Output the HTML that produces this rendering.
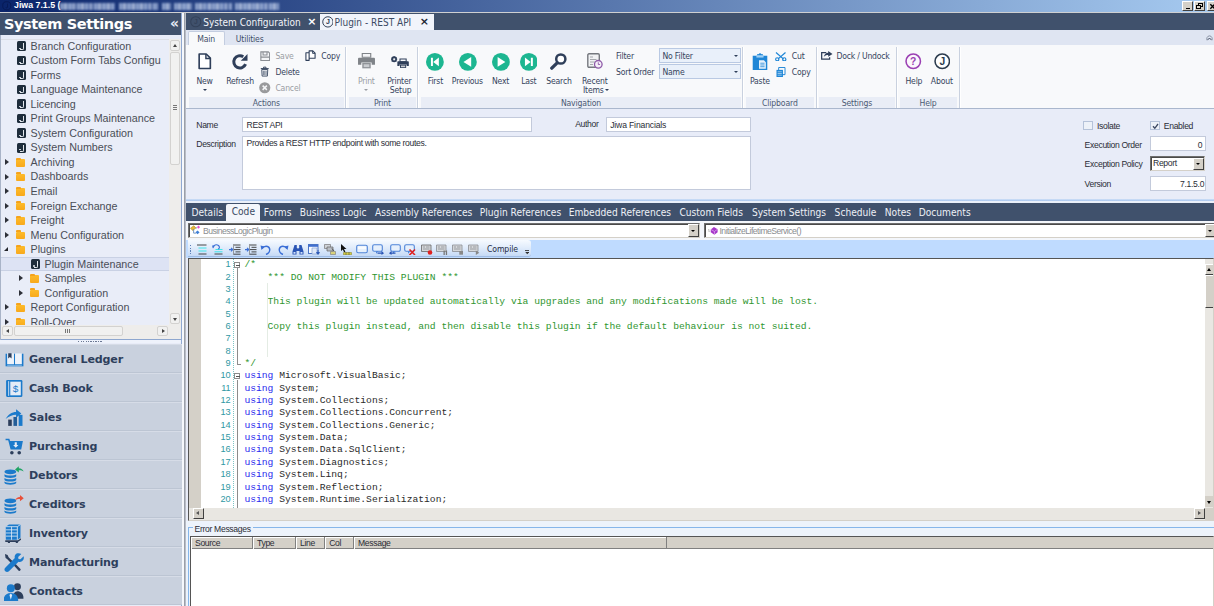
<!DOCTYPE html>
<html><head><meta charset="utf-8"><title>Jiwa 7.1.5</title>
<style>
*{box-sizing:border-box;margin:0;padding:0}
html,body{width:1214px;height:606px;overflow:hidden;background:#d4d0c8;font-family:"Liberation Sans",sans-serif}
#app{position:absolute;left:0;top:0;width:1214px;height:606px;overflow:hidden}
#app div,#app span,#app svg,#app i,#app b{position:absolute;white-space:nowrap;font-style:normal}
.tah{font-family:"DejaVu Sans Condensed","Liberation Sans",sans-serif}
.ver{font-family:"DejaVu Sans",sans-serif;font-weight:bold}
/* title */
#title{left:0;top:0;width:1214px;height:12px;background:linear-gradient(90deg,#0a246a,#a6caf0)}
#title .t{left:14px;top:-1px;font:bold 8.8px/13px "Liberation Sans",sans-serif;color:#fff}
#title .bw{top:3px;height:7px;filter:blur(1px);opacity:.8;background:repeating-linear-gradient(90deg,#a9bce0 0 3px,#6d86bd 3px 4.500px,#c6d3ec 4.500px 7px,#566fa8 7px 8.500px)}
#title .wb{top:1px;width:10px;height:9.500px;background:#d4d0c8;border:1px solid;border-color:#fff #404040 #404040 #fff;font:bold 8px/7px "Liberation Sans",sans-serif;color:#000;text-align:center}
/* left */
#left{left:0;top:12px;width:186px;height:594px;background:#e8ecf8}
#lhead{left:0;top:1px;width:182px;height:22px;background:#40516c}
#lhead .h{left:4px;top:0;font:bold 14.5px/22px "DejaVu Sans",sans-serif;color:#fff;letter-spacing:-.4px}
#lhead .c{left:170px;top:-1.500px;font:bold 14px/22px "DejaVu Sans",sans-serif;color:#e7ebf7}
#tree{left:1px;top:27px;width:180px;height:300px;background:#e9edf8;overflow:hidden;border-top:1px solid #dcdfe6}
#tree .r{left:0;width:168px;height:14.53px;font:10.72px/14.53px "Liberation Sans",sans-serif;color:#4a4d57}
#tree .r span{top:0}
#tree .sel{background:#dde3f4;box-shadow:inset 0 1px #c9d1e4,inset 0 -1px #c9d1e4}
.ji{width:9px;height:9.5px;background:#1e2d3c;border-radius:1.5px;top:2.6px}
.ji::after{content:"";position:absolute;left:3.200px;top:2px;width:2.600px;height:5.500px;border:1.100px solid #e3e8ee;border-left:0;border-top:0;border-radius:0 0 2px 0}
.ji::before{content:"";position:absolute;left:2.200px;top:6.200px;width:1.600px;height:1.200px;background:#e3e8ee;border-radius:1px}
.fo{width:9.5px;height:7.5px;background:linear-gradient(180deg,#fdbb2a,#f8a91c);border-radius:1px;top:4.300px}
.fo::before{content:"";position:absolute;left:0;top:-1.5px;width:5px;height:2px;background:#f5a31c;border-radius:1px 1px 0 0}
.ar{width:0;height:0;border:3.100px solid transparent;border-left:4.200px solid #2d3038;border-right:0;top:4.200px}
.ao{width:0;height:0;border:2.5px solid transparent;border-bottom:4.5px solid #23252b;border-top:0;border-left-width:4.5px;border-right:0;top:4.5px}
.sb{background:#eeedeb}
.sbb{background:#f1f1f0;border:1px solid #d3d2d0;border-radius:2px}
.navb{left:0;width:182px;height:29px;background:#c9d1de;border-top:1px solid #d6dce7;border-bottom:1px solid #bcc5d3}
.navb .l{left:29px;top:0.500px;font:bold 11.100px/28px "DejaVu Sans",sans-serif;color:#2e3f5c;letter-spacing:-.15px}

#main{left:186px;top:12px;width:1028px;height:594px;background:#e8ecf8}
#dtabs{background:#40516c}
.dt2{background:#f1f4fb}
.dtt{font-size:10px;line-height:16px}
.dtx{font:bold 11px/16px "DejaVu Sans",sans-serif}
#rtabs{background:#dfe5f2;border-bottom:1px solid #b3c5e3}
#rmain{background:#f8f9fb;border:1px solid #c3cde0;border-bottom:0;border-radius:2px 2px 0 0}
.rt{font-size:8.600px;color:#3f4e68;letter-spacing:-.15px}
#rib{background:#f8f9fb;border-bottom:1px solid #aab7cd}
.gl{background:#e9edf6}
.glt{font-size:8.600px;line-height:12px;color:#4b5a74;text-align:center;letter-spacing:-.15px}
.gs{width:2px;background:linear-gradient(90deg,#c9d1df 0 1px,#fff 1px 2px)}
.rl{font-size:8.600px;line-height:12px;color:#35435c;letter-spacing:-.2px}
.rl.dis{color:#9a9da3}
.dd{width:0;height:0;border-style:solid;border-color:#2f3f5a transparent transparent;border-width:2.500px 2.500px 0}
.cb{background:#e9f0fa;border:1px solid #b9c9e3}

.fl{font:8.600px/12px "Liberation Sans",sans-serif;color:#2a2d36;letter-spacing:-.33px}
.fl.cg{color:#8a8c90;letter-spacing:-.52px}
.inp{background:#fff;border:1px solid #c3cadb}
.chk{width:9.500px;height:9.500px;background:#edf1f8;border:1px solid #b5c2d9}
.ccb{background:#fff;border:1px solid;border-color:#6e6e6e #d4d0c8 #d4d0c8 #6e6e6e;box-shadow:inset 1px 1px 0 #4a4a4a}
.cbtn{background:#d4d0c8;border:1px solid;border-color:#fff #404040 #404040 #fff}
#tabs{background:#40516c}
.tabact{background:#f3f6fb;border-radius:2px 2px 0 0}
.tb{font-size:10.150px;line-height:16px;color:#edf0f6}

#ed{background:#fff;border:1px solid;border-color:#555 #d4d0c8 #d4d0c8 #555;overflow:hidden}
.ln{font:9.200px/12px "Liberation Sans",sans-serif;letter-spacing:-.1px;color:#2f97a3;width:20px;text-align:right}
.cl{font:9.675px/12px "Liberation Mono",monospace;color:#2a2a2a;white-space:pre!important}
.cl span{position:static!important;white-space:pre!important}
.cm{color:#2f962f}
.kw{color:#2a2aee}
.fb{width:6.200px;height:6.200px;background:#fff;border:1px solid #8c8c8c}
.wsb{background:#e9e7e2}
#lv{background:#fff;border:1px solid;border-color:#555 #d4d0c8 #d4d0c8 #555;overflow:hidden}
.lh{border-right:1px solid #808080;box-shadow:inset 1px 1px 0 #fff}
</style></head><body>
<div id="app">
<div id="title"><span class="t">Jiwa 7.1.5 (</span><div class="bw" style="left:60px;width:55px"></div><div class="bw" style="left:119px;width:39px"></div><div class="bw" style="left:162px;width:8.5px"></div><div class="bw" style="left:174px;width:17.5px"></div><div class="bw" style="left:195px;width:37px"></div><div class="bw" style="left:235px;width:44px"></div><svg viewBox="0 0 10 10" width="9.500" height="9.500" style="left:2px;top:1px"><circle cx="5" cy="5" r="4.300" fill="none" stroke="#071a55" stroke-width="1"/><path d="M5.800 2.800v3.500c0 1.200-1.600 1.200-2 .3" fill="none" stroke="#071a55" stroke-width="1"/></svg><div class="wb" style="left:1182px;width:10.500px"><i style="left:2.500px;top:5.500px;width:4px;height:1.500px;background:#000"></i></div><div class="wb" style="left:1193.500px;width:11px"><i style="left:3.500px;top:1px;width:4.500px;height:4px;border:1px solid #000;border-top-width:1.500px"></i><i style="left:1.800px;top:3px;width:4.500px;height:4px;border:1px solid #000;border-top-width:1.500px;background:#d4d0c8"></i></div><div class="wb" style="left:1206.700px;width:11px"><svg viewBox="0 0 8 8" width="7" height="7" style="left:1.500px;top:0.500px"><path d="M1.500 1.500l5 5M6.500 1.500l-5 5" stroke="#000" stroke-width="1.500"/></svg></div></div>
<div id="topline" style="left:0;top:12px;width:1214px;height:1px;background:#cfd0d2;z-index:5"></div>
<div id="left">
 <div id="lhead"><span class="h">System Settings</span><span class="c">«</span></div>
 <div id="tree">
  <div class="r" style="top:-1.26px"><i class="ji" style="left:16.2px"></i><span style="left:29.5px">Branch Configuration</span></div>
  <div class="r" style="top:13.27px"><i class="ji" style="left:16.2px"></i><span style="left:29.5px">Custom Form Tabs Configu</span></div>
  <div class="r" style="top:27.79px"><i class="ji" style="left:16.2px"></i><span style="left:29.5px">Forms</span></div>
  <div class="r" style="top:42.32px"><i class="ji" style="left:16.2px"></i><span style="left:29.5px">Language Maintenance</span></div>
  <div class="r" style="top:56.84px"><i class="ji" style="left:16.2px"></i><span style="left:29.5px">Licencing</span></div>
  <div class="r" style="top:71.37px"><i class="ji" style="left:16.2px"></i><span style="left:29.5px">Print Groups Maintenance</span></div>
  <div class="r" style="top:85.9px"><i class="ji" style="left:16.2px"></i><span style="left:29.5px">System Configuration</span></div>
  <div class="r" style="top:100.42px"><i class="ji" style="left:16.2px"></i><span style="left:29.5px">System Numbers</span></div>
  <div class="r" style="top:114.95px"><i class="ar" style="left:3.7px"></i><i class="fo" style="left:14.7px"></i><span style="left:29.5px">Archiving</span></div>
  <div class="r" style="top:129.47px"><i class="ar" style="left:3.7px"></i><i class="fo" style="left:14.7px"></i><span style="left:29.5px">Dashboards</span></div>
  <div class="r" style="top:144.0px"><i class="ar" style="left:3.7px"></i><i class="fo" style="left:14.7px"></i><span style="left:29.5px">Email</span></div>
  <div class="r" style="top:158.53px"><i class="ar" style="left:3.7px"></i><i class="fo" style="left:14.7px"></i><span style="left:29.5px">Foreign Exchange</span></div>
  <div class="r" style="top:173.05px"><i class="ar" style="left:3.7px"></i><i class="fo" style="left:14.7px"></i><span style="left:29.5px">Freight</span></div>
  <div class="r" style="top:187.58px"><i class="ar" style="left:3.7px"></i><i class="fo" style="left:14.7px"></i><span style="left:29.5px">Menu Configuration</span></div>
  <div class="r" style="top:202.1px"><i class="ao" style="left:2.7px"></i><i class="fo" style="left:14.7px"></i><span style="left:29.5px">Plugins</span></div>
  <div class="r sel" style="top:216.63px"><i class="ji" style="left:30.2px"></i><span style="left:43.5px">Plugin Maintenance</span></div>
  <div class="r" style="top:231.16px"><i class="ar" style="left:17.7px"></i><i class="fo" style="left:28.7px"></i><span style="left:43.5px">Samples</span></div>
  <div class="r" style="top:245.68px"><i class="ar" style="left:17.7px"></i><i class="fo" style="left:28.7px"></i><span style="left:43.5px">Configuration</span></div>
  <div class="r" style="top:260.21px"><i class="ar" style="left:3.7px"></i><i class="fo" style="left:14.7px"></i><span style="left:29.5px">Report Configuration</span></div>
  <div class="r" style="top:274.73px"><i class="ar" style="left:3.7px"></i><i class="fo" style="left:14.7px"></i><span style="left:29.5px">Roll-Over</span></div>
 </div>
 <div class="sb" style="left:169px;top:27px;width:12px;height:287px"></div>
 <div class="sbb" style="left:170px;top:28px;width:10px;height:11px"></div><div class="sbb" style="left:170px;top:40px;width:10px;height:113px"></div><div class="sbb" style="left:170px;top:301px;width:10px;height:11px"></div>
 <i style="left:172.5px;top:32px;width:0;height:0;border:2.5px solid transparent;border-bottom:3px solid #444;border-top:0"></i><i style="left:172.5px;top:305.5px;width:0;height:0;border:2.5px solid transparent;border-top:3px solid #444;border-bottom:0"></i><i style="left:173px;top:93px;width:4px;height:5px;background:repeating-linear-gradient(180deg,#777 0 1px,transparent 1px 2px)"></i>
 <div class="sb" style="left:1px;top:313px;width:180px;height:14px"></div>
 <div class="sbb" style="left:2px;top:314px;width:11px;height:10px"></div><div class="sbb" style="left:14px;top:314px;width:109px;height:10px"></div><div class="sbb" style="left:157px;top:314px;width:11px;height:10px"></div>
 <i style="left:6px;top:316.5px;width:0;height:0;border:2.5px solid transparent;border-right:3px solid #444;border-left:0"></i><i style="left:161.5px;top:316.5px;width:0;height:0;border:2.5px solid transparent;border-left:3px solid #444;border-right:0"></i><i style="left:65px;top:317px;width:5px;height:4px;background:repeating-linear-gradient(90deg,#777 0 1px,transparent 1px 2px)"></i>
 <div style="left:0;top:327px;width:182px;height:1px;background:#8ea7cf"></div>
 <div style="left:0;top:23px;width:1px;height:305px;background:#a9b4c8"></div>
 <div style="left:181px;top:0;width:1.200px;height:594px;background:#8fa8d2"></div>
 <div style="left:182.200px;top:0;width:1.600px;height:594px;background:#f6f8fc"></div><div style="left:183.800px;top:0;width:1.200px;height:594px;background:#9a9fa9"></div><div style="left:185px;top:0;width:1px;height:594px;background:#b9bdc6"></div>
 <div style="left:0;top:328px;width:181px;height:3px;background:#eef2fb"></div><div style="left:78px;top:329px;width:25px;height:1px;background:repeating-linear-gradient(90deg,#6b7894 0 1px,transparent 1px 2.500px)"></div>
 <div class="navb" style="top:332px"><svg style="left:3.500px;top:3.500px;width:21px;height:21px" viewBox="0 0 20 20" width="20" height="20"><path d="M1.5 4.5h17v12h-17z" fill="#1b7acb"/><path d="M3 4h6.5v10.5H3zM10.5 4H17v10.5h-6.5z" fill="#eef3fa"/><path d="M4 4h3.2v5l-1.6-1.3L4 9z" fill="#2c3e5b"/><path d="M3 15.2h14v.8H3z" fill="#eef3fa" opacity=".5"/></svg><span class="l">General Ledger</span></div>
 <div class="navb" style="top:361px"><svg style="left:3.500px;top:3.500px;width:21px;height:21px" viewBox="0 0 20 20" width="20" height="20"><rect x="2" y="2" width="15.5" height="16" rx="1" fill="#1b7acb"/><rect x="6" y="3.5" width="10" height="13" fill="#e4ecf7"/><rect x="4" y="3" width=".9" height="14" fill="#cfe0f3"/><text x="11" y="13.6" font-family="Liberation Sans,sans-serif" font-size="9.5" fill="#1b7acb" text-anchor="middle">$</text></svg><span class="l">Cash Book</span></div>
 <div class="navb" style="top:390px"><svg style="left:3.500px;top:3.500px;width:21px;height:21px" viewBox="0 0 20 20" width="20" height="20"><rect x="4" y="12" width="3.4" height="6" fill="#2c3e5b"/><rect x="9" y="9.5" width="3.4" height="8.5" fill="#245e98"/><rect x="14" y="7.5" width="3.6" height="10.5" fill="#1b7acb"/><path d="M1.5 11.5C4 7 7.5 4.8 11.5 4.8V2.2l5 4-5 4V7.4C8 7.4 4.5 9 1.5 11.5z" fill="#1b7acb"/></svg><span class="l">Sales</span></div>
 <div class="navb" style="top:419px"><svg style="left:3.500px;top:3.500px;width:21px;height:21px" viewBox="0 0 20 20" width="20" height="20"><path d="M1.5 2.5h3.6l.7 2.3H18l-1.6 8H6.3L4 4H1.5z" fill="#1b7acb"/><path d="M10.2 6h2v2.6h1.5l-2.5 2.6-2.5-2.6h1.5z" fill="#e4ecf7"/><circle cx="7.5" cy="16" r="1.7" fill="#2c3e5b"/><circle cx="14.5" cy="16" r="1.7" fill="#2c3e5b"/></svg><span class="l">Purchasing</span></div>
 <div class="navb" style="top:448px"><svg style="left:3.500px;top:3.500px;width:21px;height:21px" viewBox="0 0 20 20" width="20" height="20"><g transform="translate(-1.8 0) scale(1.12 1)" fill="#1b7acb"><ellipse cx="7" cy="6.5" rx="5" ry="2.3"/><path d="M2 8.8c1 1.7 9 1.7 10 0v2c-1 2-9 2-10 0zM2 12.3c1 1.7 9 1.7 10 0v2c-1 2-9 2-10 0zM2 15.8c1 1.7 9 1.7 10 0v1.4c-1 2.2-9 2.2-10 0z"/></g><path transform="translate(-.5 0)" d="M11 4.2l3.6-3v1.9c2.4 0 4 1.2 4.6 3.2-1.300-1.100-2.700-1.500-4.600-1.400v2.200z" fill="#1fa463"/></svg><span class="l">Debtors</span></div>
 <div class="navb" style="top:477px"><svg style="left:3.500px;top:3.500px;width:21px;height:21px" viewBox="0 0 20 20" width="20" height="20"><g transform="translate(-1.8 0) scale(1.12 1)" fill="#1b7acb"><ellipse cx="7" cy="6.5" rx="5" ry="2.3"/><path d="M2 8.8c1 1.7 9 1.7 10 0v2c-1 2-9 2-10 0zM2 12.3c1 1.7 9 1.7 10 0v2c-1 2-9 2-10 0zM2 15.8c1 1.7 9 1.7 10 0v1.4c-1 2.2-9 2.2-10 0z"/></g><path transform="translate(-.5 0)" d="M19.300 4l-3.600-3v1.900c-2.400 0-4 1.200-4.600 3.200 1.300-1.100 2.700-1.500 4.600-1.400v2.200z" fill="#e8503a"/></svg><span class="l">Creditors</span></div>
 <div class="navb" style="top:506px"><svg style="left:3.500px;top:3.500px;width:21px;height:21px" viewBox="1.300 0 20 20" width="20" height="20"><path d="M3 3.500l3-2h11v12.500l-3 2H3z" fill="#1b7acb"/><path d="M3 6.500h11M3 9.500h11M3 12.500h11M8.500 3.500v12.500M14 3.500l3-2M14 3.500v12.500M3 3.500h11" stroke="#dbe8f6" stroke-width=".8" fill="none"/><path d="M2.500 16.500h12l3-2v1.500l-3 2.200v.8h-2v-.8H7v.8H5v-.8H2.500z" fill="#2c3e5b"/></svg><span class="l">Inventory</span></div>
 <div class="navb" style="top:535px"><svg style="left:3.500px;top:3.500px;width:21px;height:21px" viewBox="1.300 0 20 20" width="20" height="20"><path d="M2.200 2l2.500.8 1 2.200 4.300 4.300-1.600 1.600L4.200 6.700 2.800 5.800z" fill="#2c3e5b"/><path d="M11.500 10.500l5.500 5.700c.8.800-.9 2.500-1.700 1.700L9.800 12z" fill="#2c3e5b"/><path d="M17.800 1.800l-3 3 .3 1.900 1.900.3 3-3c.6 2-.1 3.800-1.600 4.800-1 .7-2.200.8-3.300.5L6 18.400c-1 1-2.600 1-3.500 0-1-1-1-2.500 0-3.500l9.100-9.100c-.3-1.100-.2-2.300.5-3.300 1-1.500 3.500-1.800 5.700-.7z" fill="#1b7acb"/></svg><span class="l">Manufacturing</span></div>
 <div class="navb" style="top:564px"><svg style="left:3.500px;top:3.500px;width:21px;height:21px" viewBox="1 0 20 20" width="20" height="20"><circle cx="13.800" cy="5.500" r="3.300" fill="#2c3e5b"/><path d="M9.500 17c0-4.500 1.500-7.200 4.300-7.200 3.200 0 5.700 2.500 5.700 6.200v1z" fill="#2c3e5b"/><circle cx="7.500" cy="7" r="3.800" fill="#1b7acb"/><path d="M.500 19c0-4.800 2.600-7.500 7-7.500s7 2.700 7 7.500z" fill="#1b7acb"/><path d="M7.500 11.800l-1.300 1.500 1.300 4.500 1.300-4.500z" fill="#e4ecf7"/></svg><span class="l">Contacts</span></div>
</div>
<div id="main">
 <div id="dtabs" style="left:0px;top:1px;width:1028px;height:17px"></div>
 <div class="dt2" style="left:134px;top:2px;width:113.500px;height:16px"></div>
 <svg viewBox="0 0 16 16" width="11.5" height="11.5" style="left:4px;top:4.3px"><circle cx="8" cy="8" r="7" fill="none" stroke="#33425a" stroke-width="1.4"/><text x="8.200" y="11.400" text-anchor="middle" font-family="Liberation Sans,sans-serif" font-weight="bold" font-size="9.500" fill="#33425a">J</text></svg>
 <span class="tah dtt" style="left:17.3px;top:2.6px;color:#f2f4f9">System Configuration</span><span class="dtx" style="left:121.3px;top:2px;color:#fff">×</span>
 <svg viewBox="0 0 16 16" width="11.8" height="11.8" style="left:135.5px;top:4.2px"><circle cx="8" cy="8" r="7" fill="none" stroke="#2b3a50" stroke-width="1.3"/><text x="8.200" y="11.400" text-anchor="middle" font-family="Liberation Sans,sans-serif" font-weight="bold" font-size="9.500" fill="#2b3a50">J</text></svg>
 <span class="tah dtt" style="left:148.5px;top:2.6px;color:#3b4a63">Plugin - REST API</span><span class="dtx" style="left:233.8px;top:2px;color:#1c2533">×</span>
 <div id="rtabs" style="left:0px;top:18px;width:1028px;height:15.500px"></div>
 <div id="rmain" style="left:2px;top:19px;width:37px;height:15px"></div>
 <span class="tah rt" style="left:11.2px;top:19.5px;line-height:14px">Main</span><span class="tah rt" style="left:49.8px;top:19.5px;line-height:14px">Utilities</span>
<svg viewBox="0 0 8 7" width="7" height="6" style="left:1020.2px;top:22.8px"><path d="M1.200 6.300C.2 4.800 1 1 4 1s3.800 3.800 2.800 5.300" fill="none" stroke="#6a7487" stroke-width=".8"/><path d="M1.800 5.800L4 3.500l2.200 2.300" fill="none" stroke="#39435a" stroke-width="1.100"/></svg>
 <div id="rib" style="left:0px;top:33px;width:1028px;height:63.500px"></div>
 <div class="gl" style="left:2.5px;top:85.2px;width:155.5px;height:10.500px"></div><span class="tah glt" style="left:40.4px;top:85px;width:80px">Actions</span>
 <div class="gl" style="left:163px;top:85.2px;width:66.8px;height:10.500px"></div><span class="tah glt" style="left:156.5px;top:85px;width:80px">Print</span>
 <div class="gl" style="left:234.5px;top:85.2px;width:320.0px;height:10.500px"></div><span class="tah glt" style="left:355px;top:85px;width:80px">Navigation</span>
 <div class="gl" style="left:559.5px;top:85.2px;width:68.5px;height:10.500px"></div><span class="tah glt" style="left:553.9px;top:85px;width:80px">Clipboard</span>
 <div class="gl" style="left:633px;top:85.2px;width:75.5px;height:10.500px"></div><span class="tah glt" style="left:631px;top:85px;width:80px">Settings</span>
 <div class="gl" style="left:713.5px;top:85.2px;width:57.5px;height:10.500px"></div><span class="tah glt" style="left:702px;top:85px;width:80px">Help</span>
 <div class="gs" style="left:159.3px;top:34.5px;height:61px"></div>
 <div class="gs" style="left:230.9px;top:34.5px;height:61px"></div>
 <div class="gs" style="left:556.1px;top:34.5px;height:61px"></div>
 <div class="gs" style="left:629.5px;top:34.5px;height:61px"></div>
 <div class="gs" style="left:710.0px;top:34.5px;height:61px"></div>
 <div class="gs" style="left:772.5px;top:34.5px;height:61px"></div>
 <svg viewBox="0 0 14 17" width="13.500" height="16.500" style="left:12.2px;top:41.3px"><path d="M1.200 1h7.300l4.300 4.300v10.700H1.200z" fill="#fff" stroke="#2f3f5a" stroke-width="1.700" stroke-linejoin="round"/><path d="M8.200 1v4.600h4.600" fill="none" stroke="#2f3f5a" stroke-width="1.500"/></svg>
 <span class="tah rl" style="left:-11.4px;top:63.0px;width:60px;text-align:center">New</span><i class="dd" style="left:16.6px;top:76.6px"></i>
 <svg viewBox="0 0 18 18" width="17.500" height="17.500" style="left:45.2px;top:41.2px"><path d="M15 11.500A6.300 6.300 0 1 1 12.600 3.800" fill="none" stroke="#2f3f5a" stroke-width="3.100"/><path d="M10 8h7V1z" fill="#2f3f5a"/></svg>
 <span class="tah rl" style="left:24.0px;top:63.0px;width:60px;text-align:center">Refresh</span>
 <svg viewBox="0 0 12 12" width="10.500" height="10.500" style="left:73.7px;top:38.6px"><path d="M1 1h8.500l1.500 1.500V11H1z" fill="#f4f5f7" stroke="#8a8e94" stroke-width="1.300"/><path d="M3.500 1v3.500h4.500V1M1 7h10" fill="none" stroke="#8a8e94" stroke-width="1.200"/></svg>
 <span class="tah rl dis" style="left:89.4px;top:38.4px">Save</span>
 <svg viewBox="0 0 12 13" width="9.500" height="11" style="left:74.3px;top:54.3px"><path d="M2.200 4h7.600l-.5 8.300H2.700z" fill="#f4f5f7" stroke="#2f3f5a" stroke-width="1.100"/><path d="M1 2.800h10M4.500 2.500V1h3v1.500" fill="none" stroke="#2f3f5a" stroke-width="1.200"/><path d="M4.300 5.500v5.500M6 5.500v5.500M7.700 5.500v5.500" stroke="#2f3f5a" stroke-width=".8"/></svg>
 <span class="tah rl" style="left:89.4px;top:54.4px">Delete</span>
 <svg viewBox="0 0 12 12" width="11.500" height="11.500" style="left:73.2px;top:70.3px"><circle cx="6" cy="6" r="5.800" fill="#999a9c"/><path d="M3.800 3.800l4.400 4.400M8.200 3.800l-4.400 4.400" stroke="#f4f5f7" stroke-width="1.600"/></svg>
 <span class="tah rl dis" style="left:89.4px;top:70.4px">Cancel</span>
 <svg viewBox="0 0 12 12" width="11" height="11" style="left:119px;top:38.3px"><path d="M1 3h3.500v8.300H1zM4.500 1h4l2.500 2.500V9H4.500z" fill="#fff" stroke="#2f3f5a" stroke-width="1.200" stroke-linejoin="round"/><path d="M8.300 1v2.700H11" fill="none" stroke="#2f3f5a" stroke-width="1"/></svg>
 <span class="tah rl" style="left:135.3px;top:38.4px">Copy</span>
 <svg viewBox="0 0 18 17" width="17" height="16" style="left:171.5px;top:41px"><path d="M4.500 0.500h9v4h-9z" fill="#f4f5f7" stroke="#7f8388" stroke-width="1.200"/><path d="M1 5h16c.6 0 1 .4 1 1v6.500h-3.500V10h-11v2.500H0V6c0-.6.400-1 1-1z" fill="#7f8388"/><path d="M4.500 10.500h9v5.800h-9z" fill="#8f9398"/><path d="M6 12h6v3H6z" fill="#c9ccd0"/></svg>
 <span class="tah rl dis" style="left:150.3px;top:63.0px;width:60px;text-align:center">Print</span><i class="dd" style="left:178px;top:76.6px;border-top-color:#9a9da3"></i>
 <svg viewBox="0 0 19 13" width="18" height="12.500" style="left:204.8px;top:44px"><circle cx="3.300" cy="3.300" r="2.200" fill="none" stroke="#2f3f5a" stroke-width="1.700"/><path d="M3.300 0v6.600M0 3.300h6.600M1 1l4.600 4.600M5.600 1L1 5.600" stroke="#2f3f5a" stroke-width=".9"/><circle cx="3.300" cy="3.300" r="1" fill="#f8f9fb"/><path d="M9.500 3h6.500v3H9.500z" fill="#f8f9fb" stroke="#2f3f5a" stroke-width="1.100"/><path d="M7.500 5.500h10.500c.5 0 .8.300.8.800v4.200h-2.300V9H9v1.500H6.700V6.300c0-.5.300-.8.800-.8z" fill="#2f3f5a"/><path d="M9.500 9h6.500v3.500H9.500z" fill="#2f3f5a"/><path d="M10.500 10h4.500v1.700h-4.500z" fill="#c9ccd0"/></svg>
 <span class="tah rl" style="left:183.3px;top:63.0px;width:60px;text-align:center">Printer</span><span class="tah rl" style="left:184.6px;top:72.1px;width:60px;text-align:center">Setup</span>
 <svg viewBox="0 0 18 18" width="17.800" height="17.800" style="left:240.1px;top:40.9px"><circle cx="9" cy="9" r="9" fill="#1db691"/><path d="M5 4.800h2v8.400H5zM13 4.500v9L7.300 9z" fill="#fff"/></svg><span class="tah rl" style="left:219.4px;top:63.0px;width:60px;text-align:center">First</span>
 <svg viewBox="0 0 18 18" width="17.800" height="17.800" style="left:272.8px;top:40.9px"><circle cx="9" cy="9" r="9" fill="#1db691"/><path d="M12.300 4v10L4.500 9z" fill="#fff"/></svg><span class="tah rl" style="left:251.4px;top:63.0px;width:60px;text-align:center">Previous</span>
 <svg viewBox="0 0 18 18" width="17.800" height="17.800" style="left:305.9px;top:40.9px"><circle cx="9" cy="9" r="9" fill="#1db691"/><path d="M5.700 4v10l7.800-5z" fill="#fff"/></svg><span class="tah rl" style="left:284.6px;top:63.0px;width:60px;text-align:center">Next</span>
 <svg viewBox="0 0 18 18" width="17.800" height="17.800" style="left:333.6px;top:40.9px"><circle cx="9" cy="9" r="9" fill="#1db691"/><path d="M11 4.800h2v8.400h-2zM5 4.500v9l5.700-4.500z" fill="#fff"/></svg><span class="tah rl" style="left:312.8px;top:63.0px;width:60px;text-align:center">Last</span>
 <svg viewBox="0 0 17 17" width="17" height="17" style="left:364.2px;top:41.2px"><circle cx="10.800" cy="6" r="4.600" fill="#fff" stroke="#2f3f5a" stroke-width="2.500"/><path d="M7.200 9.800L1.800 15.200" stroke="#2f3f5a" stroke-width="3.300" stroke-linecap="round"/></svg>
 <span class="tah rl" style="left:343.0px;top:63.0px;width:60px;text-align:center">Search</span>
 <svg viewBox="0 0 16 16" width="16" height="16" style="left:401.3px;top:41.4px"><rect x=".8" y=".8" width="11.500" height="13.500" rx="1.200" fill="#f1f2f4" stroke="#75787e" stroke-width="1.400"/><path d="M3 4h3M3 6.500h6.500M3 9h5M3 11.500h3" stroke="#a5a8ad" stroke-width="1"/><circle cx="11.300" cy="11.300" r="3.800" fill="#f4eef8" stroke="#8e5aa8" stroke-width="1.300"/><path d="M11.300 9.300v2.200h1.700" fill="none" stroke="#8e5aa8" stroke-width=".9"/></svg>
 <span class="tah rl" style="left:378.8px;top:63.0px;width:60px;text-align:center">Recent</span><span class="tah rl" style="left:397px;top:72.0px">Items</span><i class="dd" style="left:418.6px;top:77px"></i>
 <span class="tah rl" style="left:430px;top:38.4px">Filter</span><span class="tah rl" style="left:430px;top:54.1px">Sort Order</span>
 <div class="cb" style="left:473px;top:36.2px;width:81.500px;height:14.500px"><span class="tah rl" style="left:2.500px;top:1px">No Filter</span><i class="dd" style="left:73.500px;top:6px;border-width:2.500px 2.300px 0"></i></div>
 <div class="cb" style="left:473px;top:52.2px;width:81.500px;height:14.500px"><span class="tah rl" style="left:2.500px;top:0.500px">Name</span><i class="dd" style="left:73.500px;top:6px;border-width:2.500px 2.300px 0"></i></div>
 <svg viewBox="0 0 16 18" width="16" height="17.500" style="left:566px;top:40.7px"><path d="M.5 2.800h15v14.700H.500z" fill="#1f86d6"/><path d="M5 1.200h6v3H5z" fill="#1f86d6"/><circle cx="8" cy="1.600" r="1.300" fill="#1f86d6"/><path d="M4.300 2.300h7.400v2.400H4.300z" fill="#9fd0f5"/><path d="M7 7.500h5l2 2v6.700H7z" fill="#e8f3fc"/><path d="M8.300 10.500h4.400M8.300 12.300h4.400M8.300 14.100h4.400" stroke="#1f86d6" stroke-width=".8"/></svg>
 <span class="tah rl" style="left:543.9px;top:63.0px;width:60px;text-align:center">Paste</span>
 <svg viewBox="0 0 12 10" width="11.500" height="9.500" style="left:589px;top:39.6px"><path d="M1 .5l8 7M11 .5l-8 7" stroke="#1f86d6" stroke-width="1.300"/><circle cx="2.300" cy="7.700" r="1.700" fill="none" stroke="#1f86d6" stroke-width="1.200"/><circle cx="9.700" cy="7.700" r="1.700" fill="none" stroke="#1f86d6" stroke-width="1.200"/></svg>
 <span class="tah rl" style="left:605.8px;top:38.2px">Cut</span>
 <svg viewBox="0 0 10 11" width="9.500" height="10.500" style="left:590.4px;top:54.7px"><path d="M2.800.5h6.700v7.500H2.800z" fill="none" stroke="#1f86d6" stroke-width="1"/><path d="M.5 3h6.800v7.500H.500z" fill="#1f86d6"/><path d="M1.700 5h4.400M1.700 6.800h4.400M1.700 8.600h4.400" stroke="#cfe6f9" stroke-width=".7"/></svg>
 <span class="tah rl" style="left:605.8px;top:54.0px">Copy</span>
 <svg viewBox="0 0 12 9" width="11.500" height="8.800" style="left:635px;top:39.3px"><path d="M5.500 1.700H.700v6.600h8.300V6.500" fill="none" stroke="#2f3f5a" stroke-width="1.300"/><path d="M7.500 0L12 3 7.500 6V4.200C5.500 4.200 4 4.800 3 6.200 3.300 3.500 5 1.900 7.500 1.800z" fill="#2f3f5a"/></svg>
 <span class="tah rl" style="left:650.4px;top:38.2px">Dock / Undock</span>
 <svg viewBox="0 0 16 16" width="16.500" height="16.500" style="left:719.4px;top:41.4px"><circle cx="8" cy="8" r="7" fill="#fbf7fc" stroke="#9a3fb3" stroke-width="1.500"/><text x="8" y="11.600" text-anchor="middle" font-family="Liberation Sans,sans-serif" font-weight="bold" font-size="10" fill="#9a3fb3">?</text></svg>
 <span class="tah rl" style="left:697.9px;top:63.0px;width:60px;text-align:center">Help</span>
 <svg viewBox="0 0 16 16" width="16.500" height="16.500" style="left:747.7px;top:41.4px"><circle cx="8" cy="8" r="7" fill="#fff" stroke="#2b3b4d" stroke-width="1.500"/><text x="8.200" y="11.500" text-anchor="middle" font-family="Liberation Sans,sans-serif" font-weight="bold" font-size="10" fill="#2b3b4d">J</text></svg>
 <span class="tah rl" style="left:725.8px;top:63.0px;width:60px;text-align:center">About</span>
 <span class="fl" style="left:10.3px;top:107px">Name</span><span class="fl" style="left:10.3px;top:125.5px">Description</span><span class="fl" style="left:389.2px;top:106.4px">Author</span>
 <div class="inp" style="left:56px;top:105.3px;width:289.500px;height:15px"><span class="fl" style="left:3.500px;top:1px">REST API</span></div>
 <div class="inp" style="left:419.7px;top:105px;width:145px;height:15px"><span class="fl" style="left:3.500px;top:0.800px;letter-spacing:-.15px">Jiwa Financials</span></div>
 <div class="inp" style="left:56px;top:124px;width:508.600px;height:53.500px"><span class="fl" style="left:3.500px;top:-0.500px">Provides a REST HTTP endpoint with some routes.</span></div>
 <div class="chk" style="left:897.3px;top:108.5px"></div><span class="fl" style="left:911px;top:107.6px">Isolate</span>
 <div class="chk" style="left:964px;top:108.5px"><svg viewBox="0 0 9 9" width="9" height="9" style="left:0;top:0"><path d="M2 4.300l1.800 2L7 2" fill="none" stroke="#3a4660" stroke-width="1.300"/></svg></div><span class="fl" style="left:977.8px;top:107.6px">Enabled</span>
 <span class="fl" style="left:898.6px;top:126.6px">Execution Order</span><span class="fl" style="left:898.6px;top:146.4px">Exception Policy</span><span class="fl" style="left:898.6px;top:166.2px">Version</span>
 <div class="inp" style="left:964px;top:124.4px;width:55.600px;height:15px"><span class="fl" style="right:2.500px;top:1.500px">0</span></div>
 <div class="inp" style="left:964px;top:163.6px;width:55.600px;height:15px"><span class="fl" style="right:0.500px;top:1.500px">7.1.5.0</span></div>
 <div class="ccb" style="left:964px;top:144px;width:55px;height:14.500px"><span class="fl" style="left:2px;top:0px">Report</span><div class="cbtn" style="right:0;top:0.500px;width:11.500px;height:12px"><i class="dd" style="left:2.500px;top:4px;border-top-color:#000"></i></div></div>
 <div style="left:0px;top:186.8px;width:1028px;height:2px;background:linear-gradient(180deg,#cfe0f7,#a9c6ee)"></div>
 <div style="left:0px;top:188.8px;width:1028px;height:2px;background:#eaf0fa"></div>
 <div id="tabs" style="left:0px;top:190.5px;width:1028px;height:18.500px"></div>
 <div class="tabact" style="left:39.5px;top:191.5px;width:34.500px;height:17.500px"></div>
 <span class="tah tb" style="left:5.4px;top:192.5px">Details</span> <span class="tah tb" style="left:77.8px;top:192.5px">Forms</span> <span class="tah tb" style="left:113.7px;top:192.5px">Business Logic</span> <span class="tah tb" style="left:189px;top:192.5px">Assembly References</span> <span class="tah tb" style="left:293.8px;top:192.5px">Plugin References</span> <span class="tah tb" style="left:382.7px;top:192.5px">Embedded References</span> <span class="tah tb" style="left:493.4px;top:192.5px">Custom Fields</span> <span class="tah tb" style="left:565.9px;top:192.5px">System Settings</span> <span class="tah tb" style="left:648.6px;top:192.5px">Schedule</span> <span class="tah tb" style="left:698.8px;top:192.5px">Notes</span> <span class="tah tb" style="left:732.7px;top:192.5px">Documents</span><span class="tah tb" style="left:45.7px;top:191.7px;color:#3b4a63">Code</span>
 <div style="left:0px;top:209px;width:1028px;height:19.500px;background:#f3f6fb"></div>
 <div class="ccb" style="left:1.5px;top:210.8px;width:512.500px;height:15px"><span class="fl cg" style="left:14.500px;top:1.500px">BusinessLogicPlugin</span><div class="cbtn" style="right:0;top:0.500px;width:11.500px;height:12.500px"><i class="dd" style="left:2.500px;top:4.500px;border-top-color:#000"></i></div><svg viewBox="0 0 11 11" width="10.500" height="10.500" style="left:1.500px;top:1px"><path d="M.5 3.300L4 .8l2.200 2.400-3.500 2.500z" fill="#e2b93b" stroke="#b08a1e" stroke-width=".6"/><path d="M7.300 2l1.700-1.500 1.500 1.800L8.800 3.800z" fill="#e64fd0"/><path d="M5.800 7.500l2.200-1.800 2 2.200-2.200 1.800z" fill="#3f7fd6"/><path d="M3.800 4.500v4h2.500M6 3h1.500" fill="none" stroke="#5f86b8" stroke-width=".9"/></svg></div>
 <div class="ccb" style="left:517.5px;top:210.8px;width:520px;height:15px"><span class="fl cg" style="left:15px;top:1.500px">InitializeLifetimeService()</span><div class="cbtn" style="left:500px;top:0.500px;width:12px;height:12.500px"><i class="dd" style="left:2.500px;top:4.500px;border-top-color:#000"></i></div><svg viewBox="0 0 12 10" width="11" height="9.500" style="left:3px;top:2px"><path d="M0 4h1.500M.5 5.500h1.500" stroke="#888" stroke-width=".7"/><path d="M3 3.500L6.500.8 10.500 3.300v3.200L7 9.300 3 6.700z" fill="#a535c8"/><path d="M3 3.500l4 2.300 3.500-2.500M7 5.800v3.500" fill="none" stroke="#e7b6f5" stroke-width=".7"/></svg></div>
 <div style="left:0px;top:228px;width:1028px;height:17.500px;background:#bfdbff"></div>
 <div style="left:1.5px;top:228.2px;width:343px;height:17px;background:linear-gradient(180deg,#f6faff 0%,#e2edfb 45%,#c6daf6 100%);border-radius:0 3px 3px 0;border-bottom:1px solid #9fbce4"></div>
 <i style="left:3.5px;top:232.5px;width:1.500px;height:10px;background:repeating-linear-gradient(180deg,#5b7fb8 0 1.300px,transparent 1.300px 2.700px)"></i>
 <svg viewBox="0 0 12 11" width="12" height="11" style="left:10.2px;top:231.7px"><path d="M1 1h9.500M2.500 10h8" stroke="#333" stroke-width=".9"/><path d="M2.500 4h8M2.500 7h8" stroke="#3fe6ea" stroke-width="1.100"/></svg>
 <svg viewBox="0 0 12 11" width="12" height="11" style="left:26.4px;top:231.7px"><path d="M2.500 10h8" stroke="#333" stroke-width=".9"/><path d="M3.500 5.500h7M2.500 7.800h8" stroke="#3fe6ea" stroke-width="1"/><path d="M1 3.500C1.500 1 4.500 0 6.500 1.500 8 2.800 7.500 4.500 6 5" fill="none" stroke="#3b6fd6" stroke-width="1.100"/><path d="M0 1.500l2.800.3L1 4.500z" fill="#3b6fd6"/></svg>
 <svg viewBox="0 0 12 11" width="12" height="11" style="left:42.5px;top:231.7px"><path d="M5 1h6.500M6.500 3.300h5M5 5.600h6.500M6.500 7.900h5M5 10.200h6.500" stroke="#333" stroke-width=".9"/><path d="M4.500 0v11" stroke="#777" stroke-width=".7"/><path d="M0 5.600h3.500M2 3.800l1.800 1.800L2 7.400" fill="none" stroke="#3b6fd6" stroke-width="1.100"/></svg>
 <svg viewBox="0 0 12 11" width="12" height="11" style="left:58.9px;top:231.7px"><path d="M5 1h6.500M6.500 3.300h5M5 5.600h6.500M6.500 7.900h5M5 10.200h6.500" stroke="#333" stroke-width=".9"/><path d="M4.500 0v11" stroke="#777" stroke-width=".7"/><path d="M0 5.600h3.500M2 3.800l1.800 1.800L2 7.400" fill="none" stroke="#3b6fd6" stroke-width="1.100"/></svg>
 <svg viewBox="0 0 12 11" width="12" height="11" style="left:74.2px;top:231.7px"><path d="M2 4.500C4 1.500 8.500 1.500 9.500 4.500c.8 2.500-1 5-3.500 6" fill="none" stroke="#3b6fd6" stroke-width="1.500"/><path d="M.5 1.500l4 1-3 3.500z" fill="#3b6fd6"/></svg>
 <svg viewBox="0 0 12 11" width="12" height="11" style="left:90.7px;top:231.7px"><path d="M10 4.500C8 1.500 3.500 1.500 2.500 4.500c-.8 2.500 1 5 3.500 6" fill="none" stroke="#3b6fd6" stroke-width="1.500"/><path d="M11.500 1.500l-4 1 3 3.500z" fill="#3b6fd6"/></svg>
 <svg viewBox="0 0 12 11" width="12" height="11" style="left:105.9px;top:231.7px"><path d="M2.500 1h2.300v3l1 .5h.4l1-.5V1h2.300l2 6.500v3H7.500V7h-3v3.500H.5v-3z" fill="#2a55b5"/><path d="M1.500 8h2v1.800h-2zM8.500 8h2v1.800h-2z" fill="#cfe0fa"/></svg>
 <svg viewBox="0 0 12 11" width="12" height="11" style="left:122.0px;top:231.7px"><rect x=".5" y=".5" width="9.500" height="9" fill="#f4f8ff" stroke="#4a74c4" stroke-width="1"/><path d="M.5 1h9.500v1.800H.5z" fill="#3f6fd0"/><path d="M4 4h5v6H4z" fill="#dfe9fa" stroke="#7b97cf" stroke-width=".6"/><path d="M10 6v3.500M8.500 8.500l1.500 2 1.500-2z" fill="#2a55b5" stroke="#2a55b5" stroke-width=".8"/></svg>
 <svg viewBox="0 0 12 11" width="12" height="11" style="left:138.2px;top:231.7px"><path d="M.5.500h6v4h-6z" fill="#cfd3d8" stroke="#777" stroke-width=".7"/><path d="M3 3h6v4H3z" fill="#b9bec5" stroke="#666" stroke-width=".7"/><path d="M6.500 7.500h5v3h-5z" fill="#d8d17a" stroke="#777" stroke-width=".6"/><path d="M8 4.500l2 2.500" stroke="#444" stroke-width=".9"/></svg>
 <svg viewBox="0 0 12 11" width="12" height="11" style="left:154.4px;top:231.7px"><path d="M1 0v7l1.800-1.600 1.400 3 1.200-.6-1.400-2.900h2.500z" fill="#111"/><path d="M3.500 8.500h8v2.300h-8z" fill="#d8cf3a" stroke="#7d7a2a" stroke-width=".5"/><path d="M6 8v3M9 8v3" stroke="#555" stroke-width=".6"/></svg>
 <svg viewBox="0 0 12 11" width="12" height="11" style="left:170.3px;top:231.7px"><rect x=".7" y="1.200" width="10.600" height="7.600" rx="1.500" fill="#e6f0fc" stroke="#4f84d8" stroke-width="1.100"/><path d="M2 2.500h8v2.500H2z" fill="#fff" opacity=".7"/></svg>
 <svg viewBox="0 0 12 11" width="12" height="11" style="left:186.3px;top:231.7px"><rect x=".7" y=".7" width="9.600" height="6.600" rx="1.500" fill="#e6f0fc" stroke="#4f84d8" stroke-width="1.100"/><path d="M4 7.300v2.500l2.500-2.500z" fill="#4f84d8"/><path d="M5.500 8.500h4V6.800l2.500 2.500L9.500 11V9.800h-4z" fill="#2a55b5"/></svg>
 <svg viewBox="0 0 12 11" width="12" height="11" style="left:203.0px;top:231.7px"><rect x="1.700" y=".7" width="9.600" height="6.600" rx="1.500" fill="#e6f0fc" stroke="#4f84d8" stroke-width="1.100"/><path d="M4 7.300v2.500l2.500-2.500z" fill="#4f84d8"/><path d="M6.500 8.500h-4V6.800L0 9.300 2.500 11V9.800h4z" fill="#2a55b5"/></svg>
 <svg viewBox="0 0 12 11" width="12" height="11" style="left:218.4px;top:231.7px"><rect x=".7" y=".7" width="9.600" height="6.600" rx="1.500" fill="#e6f0fc" stroke="#4f84d8" stroke-width="1.100"/><path d="M4 7.300v2.500l2.500-2.500z" fill="#4f84d8"/><path d="M5.500 5.500l5.500 5.500M11 5.500L5.500 11" stroke="#e02020" stroke-width="1.600"/></svg>
 <svg viewBox="0 0 12 11" width="12" height="11" style="left:234.5px;top:231.7px"><path d="M.5 1h9.500v6.500H.5z" fill="#d5d7da" stroke="#666" stroke-width=".8"/><path d="M2 2.500h2v1H2zM5 2.500h3.500v1H5zM2 4.500h6.500v1H2z" fill="#9a9da2"/><circle cx="9" cy="8.500" r="2.300" fill="#e02020"/></svg>
 <svg viewBox="0 0 12 11" width="12" height="11" style="left:250.0px;top:231.7px"><path d="M.5 1h9.500v6.500H.5z" fill="#d5d7da" stroke="#8a8d92" stroke-width=".8"/><path d="M2 2.500h2v1H2zM5 2.500h3.500v1H5zM2 4.500h6.500v1H2z" fill="#9a9da2"/><path d="M7.500 6.500h1.300V11H7.500zM9.800 6.500h1.300V11H9.800z" fill="#777"/></svg>
 <svg viewBox="0 0 12 11" width="12" height="11" style="left:266.2px;top:231.7px"><path d="M.5 1h9.500v6.500H.5z" fill="#d5d7da" stroke="#8a8d92" stroke-width=".8"/><path d="M2 2.500h2v1H2zM5 2.500h3.500v1H5zM2 4.500h6.500v1H2z" fill="#9a9da2"/><path d="M7.300 7h3.700v3.700H7.300z" fill="#888"/></svg>
 <svg viewBox="0 0 12 11" width="12" height="11" style="left:282.0px;top:231.7px"><path d="M.5 1h9.500v6.500H.5z" fill="#d5d7da" stroke="#8a8d92" stroke-width=".8"/><path d="M2 2.500h2v1H2zM5 2.500h3.500v1H5zM2 4.500h6.500v1H2z" fill="#9a9da2"/><path d="M7.800 6.500l3.500 2.300-3.500 2.200z" fill="#888"/></svg>
 <span class="tah" style="left:301px;top:231.4px;font-size:8.600px;line-height:12px;color:#1f2a44;letter-spacing:-.1px">Compile</span>
 <svg viewBox="0 0 5 5" width="4.500" height="4.500" style="left:338.8px;top:238px"><path d="M0 .6h5" stroke="#333" stroke-width="1"/><path d="M.3 2.300h4.400L2.500 4.800z" fill="#333"/></svg>
 <div id="ed" style="left:1.5px;top:245.5px;width:1026.500px;height:263px">
  <div style="left:0.0px;top:0.0px;width:12.500px;height:249px;background:#d4d0c8"></div>
  <div style="left:44.7px;top:0.0px;width:1px;height:249px;background:repeating-linear-gradient(180deg,#7cc4c4 0 1px,transparent 1px 2px)"></div>
  <span class="ln" style="left:22.1px;top:-0.3px">1</span><span class="cl" style="left:55.9px;top:0.7px"><span class="cm">/*</span></span>
  <span class="ln" style="left:22.1px;top:12.05px">2</span><span class="cl" style="left:55.9px;top:13.05px"><span class="cm">    *** DO NOT MODIFY THIS PLUGIN ***</span></span>
  <span class="ln" style="left:22.1px;top:24.4px">3</span>
  <span class="ln" style="left:22.1px;top:36.75px">4</span><span class="cl" style="left:55.9px;top:37.75px"><span class="cm">    This plugin will be updated automatically via upgrades and any modifications made will be lost.</span></span>
  <span class="ln" style="left:22.1px;top:49.1px">5</span>
  <span class="ln" style="left:22.1px;top:61.45px">6</span><span class="cl" style="left:55.9px;top:62.45px"><span class="cm">    Copy this plugin instead, and then disable this plugin if the default behaviour is not suited.</span></span>
  <span class="ln" style="left:22.1px;top:73.8px">7</span>
  <span class="ln" style="left:22.1px;top:86.15px">8</span>
  <span class="ln" style="left:22.1px;top:98.5px">9</span><span class="cl" style="left:55.9px;top:99.5px"><span class="cm">*/</span></span>
  <span class="ln" style="left:22.1px;top:110.85px">10</span><span class="cl" style="left:55.9px;top:111.85px"><span class="kw">using</span> Microsoft.VisualBasic;</span>
  <span class="ln" style="left:22.1px;top:123.2px">11</span><span class="cl" style="left:55.9px;top:124.2px"><span class="kw">using</span> System;</span>
  <span class="ln" style="left:22.1px;top:135.55px">12</span><span class="cl" style="left:55.9px;top:136.55px"><span class="kw">using</span> System.Collections;</span>
  <span class="ln" style="left:22.1px;top:147.9px">13</span><span class="cl" style="left:55.9px;top:148.9px"><span class="kw">using</span> System.Collections.Concurrent;</span>
  <span class="ln" style="left:22.1px;top:160.25px">14</span><span class="cl" style="left:55.9px;top:161.25px"><span class="kw">using</span> System.Collections.Generic;</span>
  <span class="ln" style="left:22.1px;top:172.6px">15</span><span class="cl" style="left:55.9px;top:173.6px"><span class="kw">using</span> System.Data;</span>
  <span class="ln" style="left:22.1px;top:184.95px">16</span><span class="cl" style="left:55.9px;top:185.95px"><span class="kw">using</span> System.Data.SqlClient;</span>
  <span class="ln" style="left:22.1px;top:197.3px">17</span><span class="cl" style="left:55.9px;top:198.3px"><span class="kw">using</span> System.Diagnostics;</span>
  <span class="ln" style="left:22.1px;top:209.65px">18</span><span class="cl" style="left:55.9px;top:210.65px"><span class="kw">using</span> System.Linq;</span>
  <span class="ln" style="left:22.1px;top:222.0px">19</span><span class="cl" style="left:55.9px;top:223.0px"><span class="kw">using</span> System.Reflection;</span>
  <span class="ln" style="left:22.1px;top:234.35px">20</span><span class="cl" style="left:55.9px;top:235.35px"><span class="kw">using</span> System.Runtime.Serialization;</span>
  <div class="fb" style="left:45.8px;top:3.5px"><i style="left:1px;top:2.200px;width:3.500px;height:1px;background:#555"></i></div>
  <div class="fb" style="left:45.8px;top:114.7px"><i style="left:1px;top:2.200px;width:3.500px;height:1px;background:#555"></i></div>
  <div style="left:48.7px;top:9.8px;width:1px;height:95.500px;background:#8c8c8c"></div><div style="left:48.7px;top:105.0px;width:3.500px;height:1px;background:#8c8c8c"></div>
  <div style="left:48.7px;top:121.0px;width:1px;height:128px;background:#8c8c8c"></div>
  <div style="left:78.8px;top:24.5px;width:1px;height:74px;background:#e4ece4"></div>
  <div class="wsb" style="left:1016.0px;top:0.0px;width:10px;height:249px"></div>
  <div class="cbtn" style="left:1016.0px;top:5.0px;width:10px;height:11px"><i class="dd" style="left:1.500px;top:3px;border-width:0 2.500px 3px;border-color:transparent transparent #000"></i></div>
  <div class="cbtn" style="left:1016.0px;top:16.0px;width:10px;height:33px"></div>
  <div class="cbtn" style="left:1016.0px;top:237.5px;width:10px;height:11px;border-color:#d4d0c8"><i class="dd" style="left:1.500px;top:4px;border-top-color:#000;border-width:3px 2.500px 0"></i></div>
  <div class="wsb" style="left:0.0px;top:249.0px;width:1024.500px;height:12px"></div>
  <div class="cbtn" style="left:4.8px;top:249.8px;width:11px;height:11px"><i class="dd" style="left:2px;top:2px;border-width:2.500px 3px 2.500px 0;border-color:transparent #555 transparent transparent"></i></div>
  <div class="cbtn" style="left:1005.0px;top:249.8px;width:11px;height:11px"><i class="dd" style="left:3.500px;top:2px;border-width:2.500px 0 2.500px 3px;border-color:transparent transparent transparent #555"></i></div>
  <div style="left:1016.0px;top:249.0px;width:10px;height:12px;background:#d4d0c8"></div>
 </div>
 <div style="left:0px;top:508.5px;width:1028px;height:86px;background:#edf3fb"></div>
 <div style="left:1.5px;top:515.3px;width:1027px;height:80px;border:1px solid #86b6ea;border-right:0;border-bottom:0"></div>
 <span class="fl" style="left:6.6px;top:510.6px;background:#edf3fb;padding:0 2px">Error Messages</span>
 <div id="lv" style="left:4px;top:524px;width:1024px;height:72px">
  <div style="left:0;top:0;width:1024px;height:11.500px;background:#d4d0c8;border-bottom:1px solid #808080"></div>
  <div class="lh" style="left:0px;top:0;width:62px;height:11.500px"><span class="fl" style="left:4px;top:0">Source</span></div>
  <div class="lh" style="left:62px;top:0;width:43px;height:11.500px"><span class="fl" style="left:4px;top:0">Type</span></div>
  <div class="lh" style="left:105px;top:0;width:29.2px;height:11.500px"><span class="fl" style="left:4px;top:0">Line</span></div>
  <div class="lh" style="left:134.2px;top:0;width:28.8px;height:11.500px"><span class="fl" style="left:4px;top:0">Col</span></div>
  <div class="lh" style="left:163px;top:0;width:313px;height:11.500px"><span class="fl" style="left:4px;top:0">Message</span></div>
 </div>
</div>
</div>
</body></html>
